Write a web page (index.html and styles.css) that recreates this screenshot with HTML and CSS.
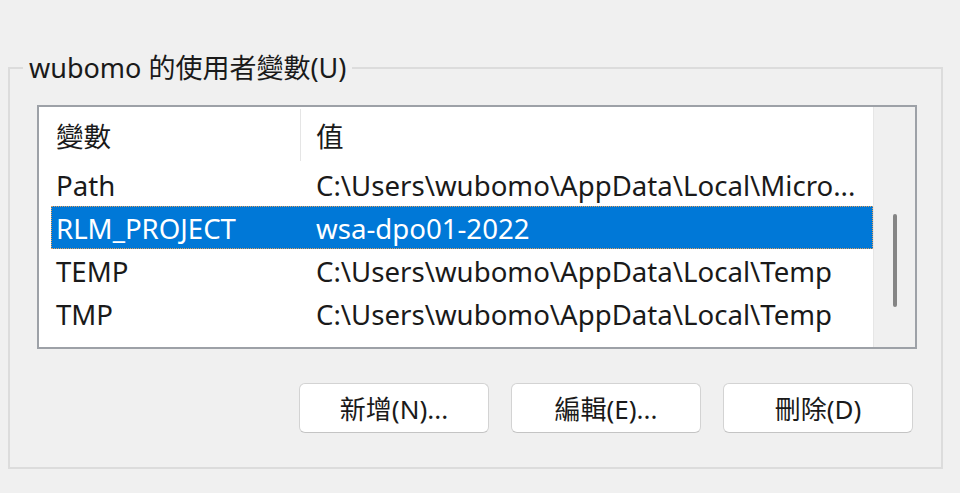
FILE: index.html
```html
<!DOCTYPE html>
<html lang="zh-Hant">
<head>
<meta charset="utf-8">
<title>使用者變數</title>
<link rel="stylesheet" href="styles.css">
</head>
<body>
<fieldset class="group">
  <legend class="group-title">wubomo 的使用者變數(U)</legend>
  <div class="listbox">
    <div class="list">
      <div class="list-header">
        <div class="hcell hcell-name">變數</div>
        <div class="hcell hcell-value">值</div>
      </div>
      <div class="row"><div class="cell-name">Path</div><div class="cell-value">C:\Users\wubomo\AppData\Local\Micro...</div></div>
      <div class="row row-selected"><div class="cell-name">RLM_PROJECT</div><div class="cell-value">wsa-dpo01-2022</div></div>
      <div class="row"><div class="cell-name">TEMP</div><div class="cell-value">C:\Users\wubomo\AppData\Local\Temp</div></div>
      <div class="row"><div class="cell-name">TMP</div><div class="cell-value">C:\Users\wubomo\AppData\Local\Temp</div></div>
    </div>
    <div class="scrollbar"><div class="thumb"></div></div>
  </div>
  <div class="buttons">
    <button class="btn" type="button">新增(N)...</button>
    <button class="btn" type="button">編輯(E)...</button>
    <button class="btn" type="button">刪除(D)</button>
  </div>
</fieldset>
</body>
</html>
```

FILE: styles.css
```css
html, body {
  margin: 0;
  background: #f0f0f0;
}
body {
  padding: 52px 0 0 8px;
  font-family: "Noto Sans", "Noto Sans CJK TC", sans-serif;
  font-size: 27px;
  color: #1a1a1a;
}
.group {
  box-sizing: border-box;
  width: 935px;
  margin: 0;
  border: 2px solid #dcdcdc;
  padding: 21px 24px 34px 27px;
}
.group-title {
  margin-left: -14px;
  padding: 0 6px;
  line-height: 32px;
  height: 32px;
  color: #1a1a1a;
}
.listbox {
  display: flex;
  height: 244px;
  box-sizing: border-box;
  border: 2px solid #9da1a7;
  background: #ffffff;
}
.list {
  flex: 1;
  background: #ffffff;
  border-right: 1px solid #e6e6e6;
  font-size: 27.6px;
}
.list-header {
  display: flex;
  height: 56px;
  align-items: center;
}
.hcell {
  box-sizing: border-box;
  height: 52px;
  display: flex;
  align-items: center;
}
.hcell-name {
  width: 262px;
  padding-left: 17px;
  border-right: 1px solid #e5e5e5;
}
.hcell-value {
  padding-left: 15px;
}
.row {
  display: flex;
  align-items: center;
  height: 43px;
  box-sizing: border-box;
  margin-left: 12px;
  padding-left: 5px;
  white-space: nowrap;
}
.row-selected {
  background: #0078d7;
  color: #ffffff;
  border: 1px dotted #e0a060;
  padding-left: 4px;
}
.cell-name {
  width: 260px;
  flex: none;
}
.cell-value {
  flex: 1;
  overflow: hidden;
}
.scrollbar {
  width: 41px;
  background: #f0f0f0;
  display: flex;
  justify-content: center;
  padding-top: 107px;
  box-sizing: border-box;
}
.thumb {
  width: 4px;
  height: 93px;
  border-radius: 2px;
  background: #858585;
}
.buttons {
  display: flex;
  justify-content: flex-end;
  gap: 22px;
  margin-top: 34px;
  margin-right: 4px;
}
.btn {
  width: 190px;
  height: 50px;
  border: 1px solid #d3d3d3;
  border-bottom-color: #c4c4c4;
  border-radius: 6px;
  background: #ffffff;
  font-family: "Noto Sans", "Noto Sans CJK TC", sans-serif;
  font-size: 26px;
  color: #1a1a1a;
  padding: 0;
}
```
